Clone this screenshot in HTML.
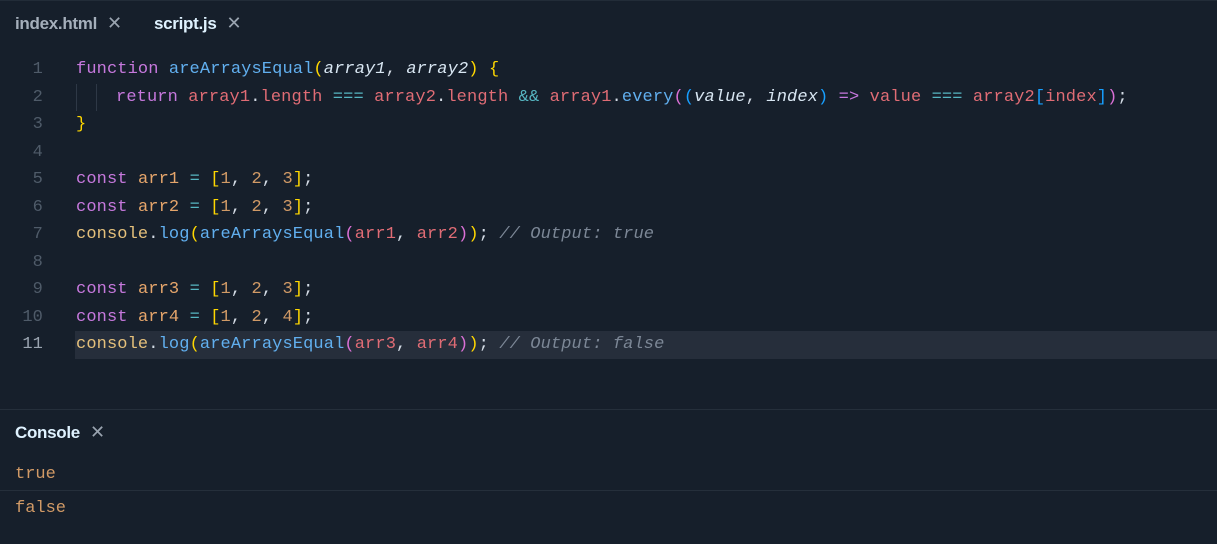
<!DOCTYPE html>
<html><head><meta charset="utf-8"><style>
body{margin:0;width:1217px;height:544px;background:#161f2b;overflow:hidden;font-family:"Liberation Sans",sans-serif}
.tabs{position:absolute;top:0;left:0;right:0;height:44px;border-top:1px solid #222c38}
.tab{position:absolute;top:12px;font-size:17px;font-weight:bold;letter-spacing:-0.3px}
.x{font-weight:normal;color:#9aa4b0;margin-left:10px;font-size:18px}
.code{position:absolute;top:56px;left:0;right:0;font-family:"Liberation Mono",monospace;font-size:17px;letter-spacing:0.12px}
.l{height:27.5px;line-height:27.5px;position:relative;white-space:pre;color:#d4dce6}
.n{position:absolute;left:0;width:43px;text-align:right;color:#4f5b69}
.c{position:absolute;left:76px}
.hl{position:absolute;left:75px;right:0;top:0;bottom:0;background:#262e3b}
.k{color:#c678dd}.f{color:#61afef}.p{color:#d8e6f2;font-style:italic}.v{color:#e06c75}.o{color:#56b6c2}.num{color:#d19a66}.g{color:#ffd700}.pk{color:#da70d6}.b{color:#179fff}.cm{color:#7c8796;font-style:italic}.y{color:#e5c07b}.cv{color:#e5a56b}
.guide{position:absolute;top:0;bottom:0;width:1px;background:#2e3846}
.sep{position:absolute;left:0;right:0;height:1px;background:#252f3b}
.out{position:absolute;left:15px;font-family:"Liberation Mono",monospace;font-size:17px;color:#d19a66}
</style></head><body>
<div class="tabs">
<div class="tab" style="left:15px;color:#a5afbb">index.html<span class="x">✕</span></div>
<div class="tab" style="left:154px;color:#dff2ff">script.js<span class="x">✕</span></div>
</div>
<div class="code">
<div class="l"><span class="n">1</span><span class="c"><span class="k">function</span> <span class="f">areArraysEqual</span><span class="g">(</span><span class="p">array1</span>, <span class="p">array2</span><span class="g">)</span> <span class="g">{</span></span></div>
<div class="l"><span class="guide" style="left:76px"></span><span class="guide" style="left:96px"></span><span class="n">2</span><span class="c" style="left:116px"><span class="k">return</span> <span class="v">array1</span>.<span class="v">length</span> <span class="o">===</span> <span class="v">array2</span>.<span class="v">length</span> <span class="o">&amp;&amp;</span> <span class="v">array1</span>.<span class="f">every</span><span class="pk">(</span><span class="b">(</span><span class="p">value</span>, <span class="p">index</span><span class="b">)</span> <span class="k">=&gt;</span> <span class="v">value</span> <span class="o">===</span> <span class="v">array2</span><span class="b">[</span><span class="v">index</span><span class="b">]</span><span class="pk">)</span>;</span></div>
<div class="l"><span class="n">3</span><span class="c"><span class="g">}</span></span></div>
<div class="l"><span class="n">4</span></div>
<div class="l"><span class="n">5</span><span class="c"><span class="k">const</span> <span class="cv">arr1</span> <span class="o">=</span> <span class="g">[</span><span class="num">1</span>, <span class="num">2</span>, <span class="num">3</span><span class="g">]</span>;</span></div>
<div class="l"><span class="n">6</span><span class="c"><span class="k">const</span> <span class="cv">arr2</span> <span class="o">=</span> <span class="g">[</span><span class="num">1</span>, <span class="num">2</span>, <span class="num">3</span><span class="g">]</span>;</span></div>
<div class="l"><span class="n">7</span><span class="c"><span class="y">console</span>.<span class="f">log</span><span class="g">(</span><span class="f">areArraysEqual</span><span class="pk">(</span><span class="v">arr1</span>, <span class="v">arr2</span><span class="pk">)</span><span class="g">)</span>; <span class="cm">// Output: true</span></span></div>
<div class="l"><span class="n">8</span></div>
<div class="l"><span class="n">9</span><span class="c"><span class="k">const</span> <span class="cv">arr3</span> <span class="o">=</span> <span class="g">[</span><span class="num">1</span>, <span class="num">2</span>, <span class="num">3</span><span class="g">]</span>;</span></div>
<div class="l"><span class="n">10</span><span class="c"><span class="k">const</span> <span class="cv">arr4</span> <span class="o">=</span> <span class="g">[</span><span class="num">1</span>, <span class="num">2</span>, <span class="num">4</span><span class="g">]</span>;</span></div>
<div class="l"><span class="hl"></span><span class="n" style="color:#9aa4b0">11</span><span class="c"><span class="y">console</span>.<span class="f">log</span><span class="g">(</span><span class="f">areArraysEqual</span><span class="pk">(</span><span class="v">arr3</span>, <span class="v">arr4</span><span class="pk">)</span><span class="g">)</span>; <span class="cm">// Output: false</span></span></div>
</div>
<div class="sep" style="top:409px"></div>
<div class="tab" style="left:15px;top:422px;color:#dff2ff;position:absolute">Console<span class="x">✕</span></div>
<div class="out" style="top:465px">true</div>
<div class="sep" style="top:490px"></div>
<div class="out" style="top:499px">false</div>
</body></html>
